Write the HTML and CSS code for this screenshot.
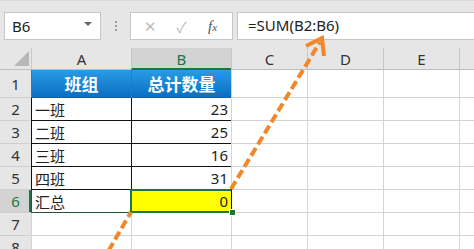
FILE: index.html
```html
<!DOCTYPE html>
<html lang="zh-CN">
<head>
    <meta charset="UTF-8">
    <title>SUM - 工作表</title>
    <link rel="stylesheet" href="styles.css">
</head>
<body>
    <div class="sheet-window">
        <div class="formula-bar">
            <div class="name-box">
                <span>B6</span>
                <span class="name-caret"></span>
            </div>
            <div class="bar-grip">
                <span></span><span></span><span></span>
            </div>
            <div class="bar-buttons">
                <span class="bar-btn">&#x2715;</span>
                <span class="bar-btn">&#x2713;</span>
                <span class="bar-btn fx"><i>f</i><i class="x">x</i></span>
            </div>
            <div class="formula-input">=SUM(B2:B6)</div>
        </div>

        <div class="grid">
            <div class="corner"><span class="corner-tri"></span></div>
            <div class="col-head">A</div>
            <div class="col-head active">B</div>
            <div class="col-head">C</div>
            <div class="col-head">D</div>
            <div class="col-head">E</div>
            <div class="col-head"></div>

            <div class="row-head">1</div>
            <div class="cell title">班组</div>
            <div class="cell title">总计数量</div>
            <div class="cell"></div><div class="cell"></div><div class="cell"></div><div class="cell"></div>

            <div class="row-head">2</div>
            <div class="cell data">一班</div>
            <div class="cell data num">23</div>
            <div class="cell"></div><div class="cell"></div><div class="cell"></div><div class="cell"></div>

            <div class="row-head">3</div>
            <div class="cell data">二班</div>
            <div class="cell data num">25</div>
            <div class="cell"></div><div class="cell"></div><div class="cell"></div><div class="cell"></div>

            <div class="row-head">4</div>
            <div class="cell data">三班</div>
            <div class="cell data num">16</div>
            <div class="cell"></div><div class="cell"></div><div class="cell"></div><div class="cell"></div>

            <div class="row-head">5</div>
            <div class="cell data">四班</div>
            <div class="cell data num">31</div>
            <div class="cell"></div><div class="cell"></div><div class="cell"></div><div class="cell"></div>

            <div class="row-head active">6</div>
            <div class="cell data total">汇总</div>
            <div class="cell data num selected">0<span class="fill-handle"></span></div>
            <div class="cell"></div><div class="cell"></div><div class="cell"></div><div class="cell"></div>

            <div class="row-head">7</div>
            <div class="cell"></div><div class="cell"></div><div class="cell"></div><div class="cell"></div><div class="cell"></div><div class="cell"></div>

            <div class="row-head">8</div>
            <div class="cell"></div><div class="cell"></div><div class="cell"></div><div class="cell"></div><div class="cell"></div><div class="cell"></div>
        </div>

        <!-- annotation arrow drawn over the sheet -->
        <svg class="arrow" width="474" height="249" viewBox="0 0 474 249">
            <g fill="none" stroke="#f0872a" stroke-width="4" stroke-linecap="butt">
                <line x1="102" y1="262" x2="131" y2="212" stroke-dasharray="9 4"/>
                <line x1="231" y1="189" x2="320" y2="42" stroke-dasharray="9 4"/>
                <polyline points="306,46 322,38 324,56" stroke-linejoin="miter"/>
            </g>
        </svg>
    </div>
</body>
</html>
```

FILE: styles.css
```css
* {
    margin: 0;
    padding: 0;
    box-sizing: border-box;
}

body {
    font-family: 'Noto Sans', 'Noto Sans CJK SC', sans-serif;
    background: #e6e6e6;
    overflow: hidden;
}

.sheet-window {
    position: relative;
    width: 474px;
    height: 249px;
    overflow: hidden;
}

/* formula bar */

.formula-bar {
    display: flex;
    height: 48px;
    padding: 11px 0 0 4px;
    background: #e6e6e6;
    border-top: 1px solid #d9d9d9;
}

.name-box {
    width: 97px;
    height: 28px;
    background: white;
    border: 1px solid #c6c6c6;
    display: flex;
    align-items: center;
    justify-content: space-between;
    padding: 0 8px 0 7px;
    font-size: 15px;
    color: #222;
}

.name-caret {
    width: 0;
    height: 0;
    border-left: 4px solid transparent;
    border-right: 4px solid transparent;
    border-top: 4px solid #666;
    margin-bottom: 4px;
}

.bar-grip {
    width: 29px;
    height: 28px;
    display: flex;
    flex-direction: column;
    align-items: center;
    justify-content: center;
    gap: 2px;
}

.bar-grip span {
    width: 2px;
    height: 2px;
    background: #9a9a9a;
}

.bar-buttons {
    width: 103px;
    height: 28px;
    background: white;
    border: 1px solid #c6c6c6;
    display: flex;
    align-items: center;
    justify-content: space-around;
    padding: 0 4px;
}

.bar-btn {
    color: #bcbcbc;
    font-size: 15px;
    width: 26px;
    text-align: center;
}

.bar-btn.fx {
    color: #555;
    font-family: 'Liberation Serif', serif;
    font-size: 15px;
}

.bar-btn.fx .x {
    font-size: 11px;
}

.formula-input {
    flex: 1;
    height: 28px;
    margin-left: 4px;
    background: white;
    border: 1px solid #c6c6c6;
    border-right: none;
    padding: 2px 0 0 10px;
    font-size: 15px;
    color: #222;
}

/* worksheet grid */

.grid {
    display: grid;
    grid-template-columns: 31px 100px 100px 76px 76px 76px 1fr;
    grid-template-rows: 22px 28px repeat(7, 23px);
    font-size: 15px;
    color: #222;
    background: white;
}

.corner {
    background: #e6e6e6;
    border-bottom: 1px solid #bdbdbd;
    position: relative;
}

.corner-tri {
    position: absolute;
    right: 2px;
    bottom: 3px;
    width: 0;
    height: 0;
    border-left: 15px solid transparent;
    border-bottom: 15px solid #b8b8b8;
}

.col-head {
    background: #e6e6e6;
    border-left: 1px solid #c8c8c8;
    border-bottom: 1px solid #bdbdbd;
    text-align: center;
    line-height: 22px;
    color: #333;
}

.col-head.active {
    background: #d3d3d3;
    color: #217346;
    border-bottom: 2px solid #217346;
}

.row-head {
    background: #e6e6e6;
    border-bottom: 1px solid #cfcfcf;
    text-align: center;
    color: #333;
    display: flex;
    align-items: center;
    justify-content: center;
}

.row-head.active {
    background: #d3d3d3;
    color: #217346;
    box-shadow: inset -2px 0 0 #217346;
}

.cell {
    border-left: 1px solid #d4d4d4;
    border-bottom: 1px solid #d4d4d4;
    display: flex;
    align-items: center;
    padding: 0 3px;
    white-space: nowrap;
}

.cell.title {
    background: linear-gradient(#2a9be4, #0a6fc2);
    color: white;
    font-weight: bold;
    font-size: 17px;
    justify-content: center;
    border-left-color: #1a80cc;
    border-bottom-color: #1a5f99;
}

.cell.data {
    border-left-color: #111;
    border-bottom-color: #111;
}

.cell.data.num {
    justify-content: flex-end;
    border-right: 1px solid #111;
    margin-right: -1px;
}

.cell.data.total {
    border-left-color: #22583a;
    border-bottom-color: #22583a;
}

.cell.selected {
    position: relative;
    background: #ffff00;
    border: 2px solid #217346;
    margin: -1px -1px 0 -1px;
    padding-right: 3px;
}

.fill-handle {
    position: absolute;
    right: -5px;
    bottom: -5px;
    width: 7px;
    height: 7px;
    background: #217346;
    border: 1px solid white;
}

.arrow {
    position: absolute;
    top: 0;
    left: 0;
    pointer-events: none;
}
```
